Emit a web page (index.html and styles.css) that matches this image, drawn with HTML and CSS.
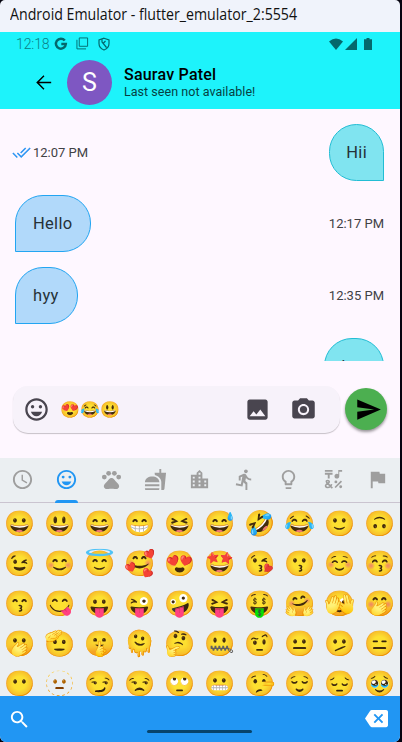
FILE: index.html
```html
<!DOCTYPE html>
<html lang="en">
<head>
<meta charset="utf-8">
<title>Android Emulator</title>
<link rel="stylesheet" href="styles.css">
</head>
<body>
<div class="window">
  <div class="titlebar"><span>Android Emulator - flutter_emulator_2:5554</span></div>
  <div class="screen">
    <header class="appbar">
      <div class="status">
        <span class="clock">12:18</span>
        <svg class="s-google" viewBox="0 0 24 24"><path d="M18.500 6.200A8.500 8.500 0 1 0 20.300 12H12.500" fill="none" stroke="currentColor" stroke-width="4.200"/></svg>
        <svg class="s-copy" viewBox="0 0 14 14"><path d="M3.500 1h9v9h-9zM1 3v9.800h9.800" fill="none" stroke="currentColor" stroke-width="1"/></svg>
        <svg class="s-shield" viewBox="0 0 14 14"><path d="M7 1.200L12 2.900V6.500C12 9.500 10 11.800 7 13C4 11.800 2 9.500 2 6.500V2.900zM5 2.500V5L9.500 10.500M6 6.500L8.500 4" fill="none" stroke="currentColor" stroke-width="1.200"/></svg>
        <span class="fill"></span>
        <svg class="s-wifi" viewBox="0 0 14 12"><path d="M0 3.500Q7-2.500 14 3.500L7 12z" fill="currentColor"/></svg>
        <svg class="s-cell" viewBox="0 0 12 12"><path d="M12 0V12H0z" fill="currentColor"/></svg>
        <svg class="s-batt" viewBox="0 0 8 12"><path d="M2.500 0h3v1.200H8V12H0V1.200h2.500z" fill="currentColor"/></svg>
      </div>
      <div class="contact">
        <svg class="back" viewBox="0 0 24 24"><path d="M20 11.200H7.400l5.600-5.700L12 4.500l-7.600 7.500 7.600 7.500 1-1L7.400 12.800H20z"/></svg>
        <div class="avatar">S</div>
        <div class="who"><div class="name">Saurav Patel</div><div class="seen">Last seen not available!</div></div>
      </div>
    </header>
    <main class="chat">
      <div class="row">
        <div class="time"><svg class="ticks" viewBox="0 0 24 24"><path d="M18 7l-1.410-1.410-6.340 6.340 1.410 1.410L18 7zm4.240-1.410L11.660 16.170 7.480 12l-1.410 1.410L11.660 19l12-12-1.420-1.410zM.41 13.410L6 19l1.410-1.410L1.830 12 .41 13.410z"/></svg>12:07 PM</div>
        <div class="bubble out">Hii</div>
      </div>
      <div class="row"><div class="bubble in">Hello</div><div class="time">12:17 PM</div></div>
      <div class="row"><div class="bubble in">hyy</div><div class="time">12:35 PM</div></div>
      <div class="row last"><div class="bubble out">hyy</div></div>
    </main>
    <div class="composer">
      <div class="field">
        <svg class="ic mood" viewBox="0 0 24 24"><path d="M11.990 2C6.470 2 2 6.480 2 12s4.470 10 9.990 10C17.520 22 22 17.520 22 12S17.520 2 11.990 2zM12 20c-4.420 0-8-3.580-8-8s3.580-8 8-8 8 3.580 8 8-3.580 8-8 8z"/><circle cx="15.500" cy="9.500" r="1.500"/><circle cx="8.500" cy="9.500" r="1.500"/><path d="M12 18c2.280 0 4.220-1.660 5-4H7c.78 2.340 2.720 4 5 4z"/></svg>
        <span class="draft">😍😂😃</span>
        <svg class="ic" viewBox="0 0 24 24"><path d="M21 19V5c0-1.100-.9-2-2-2H5c-1.100 0-2 .9-2 2v14c0 1.100.9 2 2 2h14c1.100 0 2-.9 2-2zM8.500 13.500l2.500 3.010L14.500 12l4.500 6H5l3.500-4.500z"/></svg>
        <svg class="ic cam" viewBox="0 0 24 24"><circle cx="12" cy="12" r="3.200"/><path d="M9 2L7.170 4H4c-1.100 0-2 .9-2 2v12c0 1.100.9 2 2 2h16c1.100 0 2-.9 2-2V6c0-1.100-.9-2-2-2h-3.170L15 2H9zm3 15c-2.760 0-5-2.240-5-5s2.240-5 5-5 5 2.240 5 5-2.240 5-5 5z"/></svg>
      </div>
      <div class="send"><svg viewBox="0 0 24 24"><path d="M2.010 21L23 12 2.010 3 2 10l15 2-15 2z"/></svg></div>
    </div>
    <nav class="tabs">
      <div class="tab"><svg viewBox="0 0 24 24"><path d="M11.990 2C6.470 2 2 6.480 2 12s4.470 10 9.990 10C17.520 22 22 17.520 22 12S17.520 2 11.990 2zM12 20c-4.420 0-8-3.580-8-8s3.580-8 8-8 8 3.580 8 8-3.580 8-8 8zM12.500 7H11v6l5.250 3.150.75-1.230-4.500-2.670z"/></svg></div>
      <div class="tab active"><svg viewBox="0 0 24 24"><path d="M11.990 2C6.470 2 2 6.480 2 12s4.470 10 9.990 10C17.520 22 22 17.520 22 12S17.520 2 11.990 2zM12 20c-4.420 0-8-3.580-8-8s3.580-8 8-8 8 3.580 8 8-3.580 8-8 8z"/><circle cx="15.500" cy="9.500" r="1.500"/><circle cx="8.500" cy="9.500" r="1.500"/><path d="M12 18c2.280 0 4.220-1.660 5-4H7c.78 2.340 2.720 4 5 4z"/></svg></div>
      <div class="tab"><svg viewBox="0 0 24 24"><circle cx="4.500" cy="9.500" r="2.500"/><circle cx="9" cy="5.500" r="2.500"/><circle cx="15" cy="5.500" r="2.500"/><circle cx="19.500" cy="9.500" r="2.500"/><path d="M17.340 14.860c-.87-1.020-1.600-1.890-2.480-2.910-.46-.54-1.050-1.080-1.750-1.320-.11-.04-.22-.07-.33-.09-.25-.04-.52-.04-.78-.04s-.53 0-.79.050c-.11.020-.22.050-.33.090-.7.240-1.280.78-1.750 1.320-.87 1.020-1.600 1.890-2.480 2.910-1.310 1.310-2.920 2.760-2.620 4.790.29 1.020 1.020 2.030 2.330 2.320.73.150 3.060-.44 5.540-.44h.18c2.480 0 4.810.58 5.540.44 1.310-.29 2.040-1.310 2.330-2.320.31-2.040-1.300-3.490-2.610-4.800z"/></svg></div>
      <div class="tab"><svg viewBox="0 0 24 24"><path d="M18.060 22.990h1.660c.84 0 1.530-.64 1.630-1.460L23 5.050h-5V1h-1.970v4.050h-4.970l.3 2.340c1.710.47 3.310 1.320 4.270 2.260 1.440 1.420 2.430 2.890 2.430 5.290v8.050zM1 21.990V21h15.030v.99c0 .55-.45 1-1.010 1H2.010c-.56 0-1.010-.45-1.010-1zm15.030-7c0-8-15.030-8-15.030 0h15.030zM1.020 17h15v2h-15z"/></svg></div>
      <div class="tab"><svg viewBox="0 0 24 24"><path d="M15 11V5l-3-3-3 3v2H3v14h18V11h-6zm-8 8H5v-2h2v2zm0-4H5v-2h2v2zm0-4H5V9h2v2zm6 8h-2v-2h2v2zm0-4h-2v-2h2v2zm0-4h-2V9h2v2zm0-4h-2V5h2v2zm6 12h-2v-2h2v2zm0-4h-2v-2h2v2z"/></svg></div>
      <div class="tab"><svg viewBox="0 0 24 24"><path d="M13.490 5.480c1.100 0 2-.9 2-2s-.9-2-2-2-2 .9-2 2 .9 2 2 2zm-3.600 13.900l1-4.400 2.100 2v6h2v-7.500l-2.100-2 .6-3c1.300 1.500 3.300 2.500 5.500 2.500v-2c-1.900 0-3.500-1-4.300-2.400l-1-1.600c-.4-.6-1-1-1.700-1-.3 0-.5.1-.8.1l-5.200 2.200v4.700h2v-3.400l1.800-.7-1.600 8.100-4.900-1-.4 2 7 1.400z"/></svg></div>
      <div class="tab"><svg viewBox="0 0 24 24"><path d="M9 21c0 .55.45 1 1 1h4c.55 0 1-.45 1-1v-1H9v1zm3-19C8.140 2 5 5.140 5 9c0 2.380 1.190 4.470 3 5.740V17c0 .55.45 1 1 1h6c.55 0 1-.45 1-1v-2.260c1.810-1.270 3-3.360 3-5.740 0-3.860-3.140-7-7-7zm2.850 11.100l-.85.6V16h-4v-2.300l-.85-.6C7.800 12.160 7 10.630 7 9c0-2.760 2.240-5 5-5s5 2.240 5 5c0 1.630-.8 3.160-2.150 4.100z"/></svg></div>
      <div class="tab"><svg viewBox="0 0 24 24"><path d="M3 2h8v2H3zM3 5h8v2H8v4H6V7H3zM15.500 11c1.380 0 2.500-1.120 2.500-2.500V4h3V2h-4v4.510c-.42-.32-.93-.51-1.500-.51C14.120 6 13 7.120 13 8.500s1.120 2.500 2.500 2.500z"/><circle cx="14.500" cy="14.500" r="1.500"/><circle cx="19.500" cy="19.500" r="1.500"/><path d="M13.700 20.300l6.600-6.600M10.800 21L4.900 15C4 13.500 5 13 6 13C7.800 13 8 14.700 6.800 15.600L4.600 17C2.800 18.400 4 20.300 5.700 20.300C8 20.300 9.500 19 10 16.800" class="line"/></svg></div>
      <div class="tab"><svg viewBox="0 0 24 24"><path d="M14.400 6L14 4H5v17h2v-7h5.600l.4 2h7V6z"/></svg></div>
    </nav>
    <div class="grid">
      <span>😀</span><span>😃</span><span>😄</span><span>😁</span><span>😆</span><span>😅</span><span>🤣</span><span>😂</span><span>🙂</span><span>🙃</span>
      <span>😉</span><span>😊</span><span>😇</span><span>🥰</span><span>😍</span><span>🤩</span><span>😘</span><span>😗</span><span>☺️</span><span>😚</span>
      <span>😙</span><span>😋</span><span>😛</span><span>😜</span><span>🤪</span><span>😝</span><span>🤑</span><span>🤗</span><span>🫣</span><span>🤭</span>
      <span>🫢</span><span>🫡</span><span>🤫</span><span>🫠</span><span>🤔</span><span>🤐</span><span>🤨</span><span>😐</span><span>🫤</span><span>😑</span>
      <span>😶</span><span>🫥</span><span>😏</span><span>😒</span><span>🙄</span><span>😬</span><span>🤥</span><span>😌</span><span>😔</span><span>🥹</span>
    </div>
    <footer class="bottom">
      <svg class="search" viewBox="0 0 24 24"><path d="M15.500 14h-.79l-.28-.27C15.410 12.590 16 11.110 16 9.500 16 5.910 13.090 3 9.500 3S3 5.910 3 9.500 5.910 16 9.500 16c1.610 0 3.090-.59 4.230-1.570l.27.280v.79l5 4.990L20.490 19l-4.990-5zm-6 0C7.010 14 5 11.990 5 9.500S7.010 5 9.500 5 14 7.010 14 9.500 11.990 14 9.500 14z"/></svg>
      <div class="handle"></div>
      <svg class="erase" viewBox="0 0 24 24"><path d="M22 3H7c-.69 0-1.230.35-1.590.88L0 12l5.410 8.110c.36.53.9.89 1.590.89h15c1.100 0 2-.9 2-2V5c0-1.100-.9-2-2-2zm-3 12.590L17.590 17 14 13.410 10.410 17 9 15.590 12.590 12 9 8.410 10.410 7 14 10.590 17.590 7 19 8.410 15.410 12 19 15.590z"/></svg>
    </footer>
  </div>
</div>
</body>
</html>
```
FILE: styles.css
```css
* { box-sizing: border-box; }
body { margin: 0; background: #05030f; font-family: Roboto, sans-serif; }
svg { display: block; flex: none; fill: currentColor; }
.window { width: 402px; height: 742px; overflow: hidden; }
.titlebar { width: 400px; height: 32px; padding-left: 10px; background: #f0f3fb; border-radius: 5px 5px 0 0; font: 15.500px/28px "Open Sans", sans-serif; color: #111; white-space: nowrap; }
.titlebar span { display: inline-block; transform: scaleX(.914); transform-origin: left center; }
.screen { width: 400px; height: 710px; background: #fef7ff; display: flex; flex-direction: column; overflow: hidden; border-radius: 0 0 6px 6px; }

.appbar { height: 77px; background: #1df3fb; flex: none; }
.status { height: 23px; padding: 0 28px 0 16px; display: flex; align-items: center; color: #04686c; }
.clock { font-size: 14px; width: 38px; color: #0a8085; font-weight: 300; letter-spacing: -.1px; }
.s-google { width: 14px; height: 14px; }
.s-copy { width: 13px; height: 13px; margin-left: 8px; }
.s-shield { width: 14px; height: 14px; margin-left: 8px; }
.fill { flex: 1; }
.s-wifi { width: 14px; height: 12px; }
.s-cell { width: 12px; height: 12px; margin-left: 2px; }
.s-batt { width: 8px; height: 12px; margin-left: 7px; }
.contact { display: flex; align-items: center; height: 54px; padding: 0 0 0 32px; }
.back { width: 23px; height: 23px; color: #000; }
.avatar { width: 45px; height: 45px; border-radius: 50%; background: #7e57c2; color: #fff; font-size: 25px; line-height: 46px; text-align: center; margin: 0 12px; }
.who { color: #000; }
.name { font-size: 16px; font-weight: 500; line-height: 18px; letter-spacing: .22px; padding-top: 1px; }
.seen { font-size: 12.500px; line-height: 15px; color: #063f42; letter-spacing: .04px; }

.chat { height: 252px; padding: 14.700px 16px 0 15px; display: flex; flex-direction: column; gap: 14.500px; overflow: hidden; flex: none; }
.row { display: flex; justify-content: space-between; align-items: center; height: 57px; flex: none; }
.row.last { justify-content: flex-end; }
.bubble { height: 57px; padding: 0 16px; font-size: 16.500px; line-height: 55px; color: #263238; border: 1px solid; letter-spacing: .3px; }
.out { background: #80e4f0; border-color: #22bdd4; border-radius: 28px 28px 0 28px; }
.in { background: #b1d9fa; border-color: #22a5f2; border-radius: 28px 28px 28px 0; padding: 0 18px 0 17px; }
.time { display: flex; align-items: center; font-size: 13px; color: #414145; }
.ticks { width: 19px; height: 19px; color: #2f96f3; margin: 0 2px 0 -3px; }

.composer { height: 97px; padding: 25px 13px 0; display: flex; flex: none; }
.field { width: 327px; height: 47px; border-radius: 15px; background: #f7f2fa; box-shadow: 0 1px 1px rgba(0,0,0,.22); display: flex; align-items: center; padding: 0 23px 0 10px; color: #49454f; }
.ic { width: 27px; height: 27px; }
.cam { margin-left: 19.500px; }
.draft { flex: 1; font: 16px/20px "Noto Color Emoji", sans-serif; margin-left: 10.500px; color: #222; }
.send { width: 42px; height: 42px; border-radius: 50%; background: #4caf50; box-shadow: 0 2px 3px rgba(0,0,0,.4); display: flex; align-items: center; justify-content: center; margin: 2px 0 0 5px; color: #000; }
.send svg { width: 27px; height: 27px; margin-left: 4px; }

.tabs { height: 45px; background: #ebeff2; border-bottom: 1px solid #cac4d0; display: flex; flex: none; }
.tab { flex: 1; display: flex; justify-content: center; padding-top: 10px; color: #9e9e9e; position: relative; }
.tab svg { width: 23px; height: 23px; }
.line { fill: none; stroke: currentColor; stroke-width: 1.700; }
.active { color: #2196f3; }
.active::after { content: ""; position: absolute; left: 11px; bottom: -1px; width: 23px; height: 3px; border-radius: 3px 3px 0 0; background: #2196f3; }

.grid { height: 193px; padding-top: 1px; background: #ebeff2; display: grid; grid-template-columns: repeat(10, 40px); grid-auto-rows: 40px; overflow: hidden; flex: none; }
.grid span { display: flex; align-items: center; justify-content: center; font: 25px/40px "Noto Color Emoji", sans-serif; }

.bottom { height: 46px; background: #2196f3; display: flex; justify-content: space-between; color: #fff; padding: 0 12px 0 7.500px; flex: none; }
.search { width: 23px; height: 23px; margin-top: 11.500px; }
.handle { width: 105px; height: 3px; border-radius: 2px; background: #07446c; margin: 34px -4px 0 0; }
.erase { width: 23px; height: 23px; margin-top: 11px; }
```
